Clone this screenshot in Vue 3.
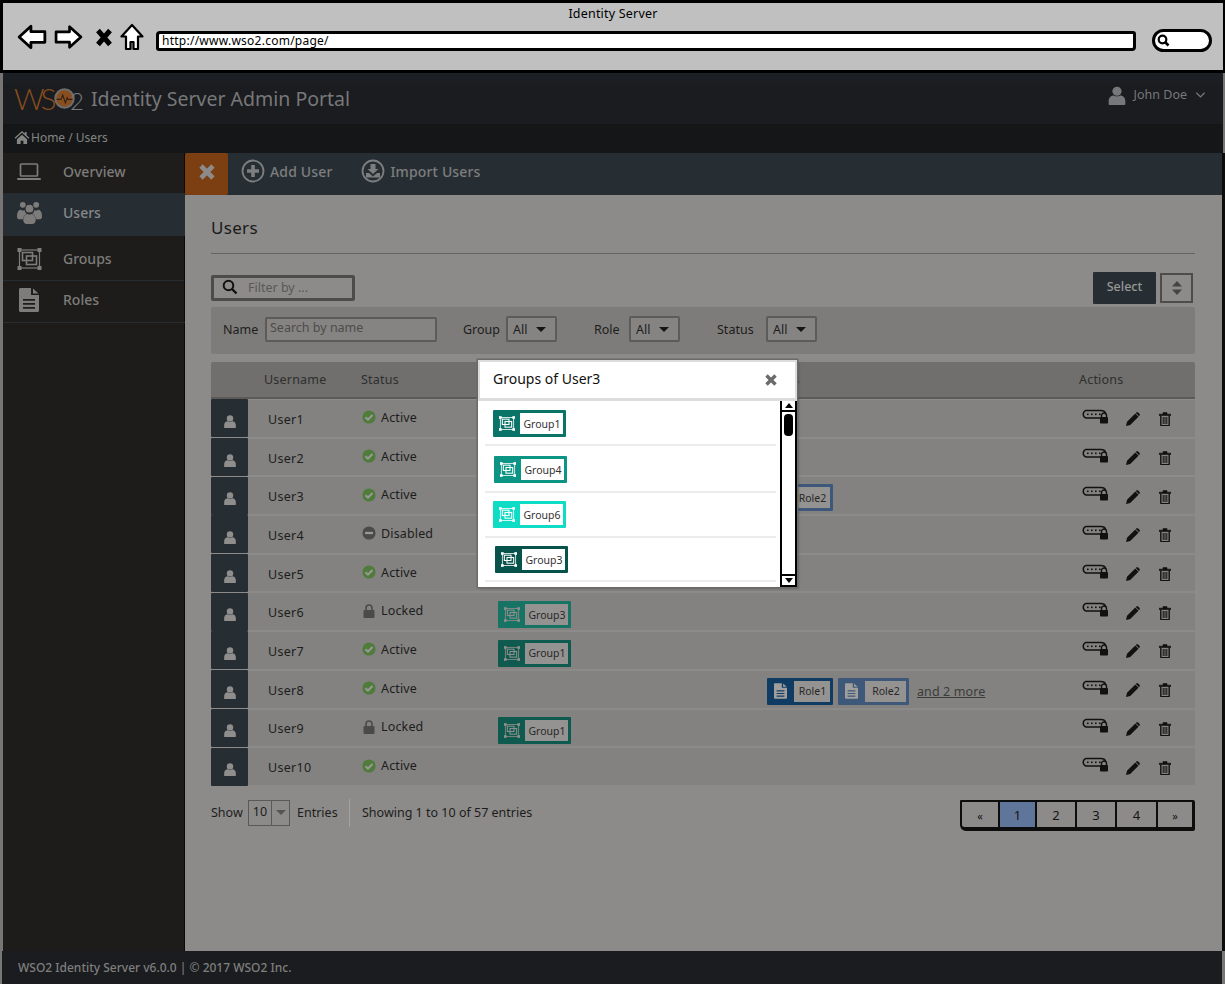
<script setup>
const sideItems = [
  { label: 'Overview', icon: 'laptop', cls: 'overview' },
  { label: 'Users', icon: 'users', cls: 'active' },
  { label: 'Groups', icon: 'group', cls: 'groups' },
  { label: 'Roles', icon: 'doc', cls: 'roles' }
]
const filters = [
  { label: 'Group', cls: 'f-group' },
  { label: 'Role', cls: 'f-role' },
  { label: 'Status', cls: 'f-status' }
]
const users = [
  { name: 'User1', status: 'Active' },
  { name: 'User2', status: 'Active' },
  { name: 'User3', status: 'Active', roles: [{ n: 'Role2', c: '#3d5878' }] },
  { name: 'User4', status: 'Disabled' },
  { name: 'User5', status: 'Active' },
  { name: 'User6', status: 'Locked', group: { n: 'Group3', c: '#177465' } },
  { name: 'User7', status: 'Active', group: { n: 'Group1', c: '#0e5a4e' } },
  { name: 'User8', status: 'Active', roles: [{ n: 'Role1', c: '#103c64' }, { n: 'Role2', c: '#3d5878' }], more: true },
  { name: 'User9', status: 'Locked', group: { n: 'Group1', c: '#0e5a4e' } },
  { name: 'User10', status: 'Active' }
]
const modalGroups = [
  { n: 'Group1', c: '#0a7468', cls: 'm1' },
  { n: 'Group4', c: '#0c9585', cls: 'm2' },
  { n: 'Group6', c: '#0fdcc4', cls: 'm3' },
  { n: 'Group3', c: '#07534c', cls: 'm4' }
]
const statusIcon = { Active: 'check', Disabled: 'minus', Locked: 'lock' }
const pages = ['«', '1', '2', '3', '4', '»']
</script>

<template>
  <div class="page">
    <svg class="defs" width="0" height="0" aria-hidden="true">
      <symbol id="i-user" viewBox="0 0 24 24">
        <circle cx="12" cy="7.500" r="5.500" fill="currentColor" />
        <path d="M2 23v-4c0-4 3-6.500 6-6.500 2.500 1.500 5.500 1.500 8 0 3 0 6 2.500 6 6.500v4c0 .6-.4 1-1 1H3c-.6 0-1-.4-1-1z" fill="currentColor" />
      </symbol>
      <symbol id="i-users" viewBox="0 0 26 24">
        <g fill="currentColor">
          <circle cx="6" cy="4" r="3" /><circle cx="20" cy="4" r="3" /><circle cx="13" cy="8" r="4" />
          <path d="M0 15c0-4 2-6 4-6 1 1 3 1 4 .6.300 2 1.200 3 2 3.600-2 1-3.500 3-3.700 5.800H2c-1 0-2-1-2-2zM26 15c0-4-2-6-4-6-1 1-3 1-4 .6-.3 2-1.200 3-2 3.600 2 1 3.500 3 3.700 5.800H24c1 0 2-1 2-2z" />
          <path d="M6.500 20c0-4 2.500-6.500 4.500-6.500 1.200.8 2.800.8 4 0 2 0 4.500 2.500 4.500 6.500 0 2.500-2 4-3.500 4h-6c-1.500 0-3.500-1.500-3.500-4z" />
        </g>
      </symbol>
      <symbol id="i-laptop" viewBox="0 0 24 18">
        <rect x="3.500" y="1" width="17" height="12" rx="1" fill="none" stroke="currentColor" stroke-width="1.700" />
        <rect x="0" y="15" width="24" height="2" rx="1" fill="currentColor" />
      </symbol>
      <symbol id="i-group" viewBox="0 0 24 22">
        <g fill="none" stroke="currentColor">
          <rect x="2" y="2" width="20" height="18" stroke-width="1.200" />
          <rect x="5" y="4.500" width="10" height="8" stroke-width="1.600" />
          <rect x="9" y="8" width="10" height="8.500" stroke-width="1.600" />
        </g>
        <g fill="currentColor" stroke="none">
          <rect x="0" y="0" width="4" height="4" /><rect x="20" y="0" width="4" height="4" />
          <rect x="0" y="18" width="4" height="4" /><rect x="20" y="18" width="4" height="4" />
        </g>
      </symbol>
      <symbol id="i-doc" viewBox="0 0 20 24">
        <path fill="currentColor" fill-rule="evenodd" d="M1.500 0H12v7h8v15.500c0 .8-.7 1.500-1.500 1.500h-17C.7 24 0 23.300 0 22.500v-21C0 .7.700 0 1.500 0zM4 11v1.800h12V11zm0 4v1.800h12V15zm0 4v1.800h12V19zM14 .5l5.500 5H14z" />
      </symbol>
      <symbol id="i-check" viewBox="0 0 16 16">
        <circle cx="8" cy="8" r="7.500" fill="#4f7c3b" />
        <path d="M4 8.200l2.800 2.800L12 5.700" fill="none" stroke="#9a9997" stroke-width="2.400" />
      </symbol>
      <symbol id="i-minus" viewBox="0 0 16 16">
        <circle cx="8" cy="8" r="7.500" fill="#4a4a49" />
        <rect x="3.500" y="6.700" width="9" height="2.600" fill="#9a9997" />
      </symbol>
      <symbol id="i-lock" viewBox="0 0 12 14">
        <path d="M3 6V4a3 3 0 0 1 6 0v2" fill="none" stroke="#4a4a49" stroke-width="1.600" />
        <rect x="0.500" y="6" width="11" height="8" rx="1" fill="#4a4a49" />
      </symbol>
      <symbol id="i-key" viewBox="0 0 28 15">
        <path d="M20 9H5a4 4 0 0 1 0-7.600h15c2.500 0 4 1 4.500 2.600" fill="none" stroke="#111" stroke-width="1.500" />
        <g fill="#111"><rect x="6" y="4.500" width="1.600" height="1.600" /><rect x="10" y="4.500" width="1.600" height="1.600" /><rect x="14" y="4.500" width="1.600" height="1.600" /><rect x="18" y="4.500" width="1.600" height="1.600" /></g>
        <path d="M20.500 8V6.500a2.500 2.500 0 0 1 5 0V8" fill="none" stroke="#111" stroke-width="1.400" />
        <rect x="19" y="8" width="8" height="6.500" rx=".8" fill="#111" />
      </symbol>
      <symbol id="i-pencil" viewBox="0 0 14 14">
        <path d="M0 14l1-4.200L9.300 1.500 12.500 4.700 4.200 13zM10.200.6c.6-.6 1.400-.6 2 0l1.200 1.200c.6.600.6 1.400 0 2l-.4.400L9.800 1z" fill="#111" />
      </symbol>
      <symbol id="i-trash" viewBox="0 0 12 14">
        <path d="M0 2.200h12v1.300H0zM4 2.200V.6h4v1.600" fill="#111" stroke="#111" stroke-width=".6" />
        <path d="M1.800 3.500V13c0 .4.300.8.800.8h6.800c.5 0 .8-.4.800-.8V3.500" fill="none" stroke="#111" stroke-width="1.400" />
        <path d="M4.200 5v7M6 5v7M7.800 5v7" stroke="#111" stroke-width="1" />
      </symbol>
    </svg>

    <section class="chrome">
      <div class="chrome-title">Identity Server</div>
      <div class="chrome-bar">
        <svg class="nav-icon back" viewBox="0 0 28 24"><path d="M2 12 13 2v5h13v10H13v5z" fill="#fff" stroke="#000" stroke-width="2.600" stroke-linejoin="round" /></svg>
        <svg class="nav-icon fwd" viewBox="0 0 28 24"><path d="M26 12 15 2v5H2v10h13v5z" fill="#fff" stroke="#000" stroke-width="2.600" stroke-linejoin="round" /></svg>
        <svg class="nav-icon stop" viewBox="0 0 16 18"><path d="M2 2l12 14M14 2 2 16" fill="none" stroke="#000" stroke-width="5" /></svg>
        <svg class="nav-icon home" viewBox="0 0 24 28"><path d="M12 2 1.500 13.500H6V26h4.500v-7h3v7H18V13.500h4.500z" fill="#fff" stroke="#000" stroke-width="2.200" stroke-linejoin="round" /></svg>
        <div class="url">http://www.wso2.com/page/</div>
        <div class="search-oval">
          <svg width="13" height="13" viewBox="0 0 13 13"><circle cx="5.500" cy="5.500" r="3.800" fill="none" stroke="#000" stroke-width="2.200" /><path d="M8 8l3.500 3.500" stroke="#000" stroke-width="2.600" /></svg>
        </div>
      </div>
    </section>

    <header class="topbar">
      <div class="logo">
        <span class="logo-ws">WS</span>
        <svg class="logo-o" viewBox="0 0 24 24">
          <circle cx="12" cy="12" r="10.500" fill="#8a4e1e" stroke="#6d6d6b" stroke-width="2.400" />
          <path d="M3 13h5l2-5 3 9 2-6 1 2h5" fill="none" stroke="#2a2018" stroke-width="1.200" />
        </svg>
        <span class="logo-two">2</span>
      </div>
      <h1 class="app-title">Identity Server Admin Portal</h1>
      <div class="account">
        <svg class="account-icon"><use href="#i-user" /></svg>
        <span>John Doe</span>
        <svg class="chev" viewBox="0 0 12 8"><path d="M1.500 1.500 6 6l4.500-4.500" fill="none" stroke="currentColor" stroke-width="1.400" /></svg>
      </div>
    </header>

    <nav class="crumbs">
      <svg class="crumb-home" viewBox="0 0 16 14"><path d="M8 0 0 7.200l1 1.100L8 2l7 6.300 1-1.100-3-2.700V1h-2v1.700zM2.500 9v5h4v-3.500h3V14h4V9L8 4z" fill="currentColor" /></svg>
      <span>Home / Users</span>
    </nav>

    <div class="shell">
      <aside class="sidebar">
        <div v-for="item in sideItems" :key="item.label" class="side-item" :class="item.cls">
          <svg class="side-icon" :class="'si-' + item.icon"><use :href="'#i-' + item.icon" /></svg>
          <span>{{ item.label }}</span>
        </div>
      </aside>

      <main class="main">
        <div class="toolbar">
          <div class="close-box">
            <svg width="18" height="18" viewBox="0 0 18 18"><path d="M3 3l12 12M15 3 3 15" stroke="#8c8b89" stroke-width="4.600" /></svg>
          </div>
          <div class="tool add">
            <svg width="24" height="24" viewBox="0 0 24 24"><circle cx="12" cy="12" r="10.500" fill="none" stroke="currentColor" stroke-width="1.800" /><path d="M12 6v12M6 12h12" stroke="currentColor" stroke-width="3.600" /></svg>
            <span>Add User</span>
          </div>
          <div class="tool import">
            <svg width="24" height="24" viewBox="0 0 24 24"><circle cx="12" cy="12" r="10.500" fill="none" stroke="currentColor" stroke-width="1.800" /><path d="M9.500 5h5v5h3L12 15 6.500 10h3zM5 14h3l4 3.500 4-3.500h3v4.500H5z" fill="currentColor" /></svg>
            <span>Import Users</span>
          </div>
        </div>

        <div class="content">
          <h2 class="page-title">Users</h2>

          <div class="control-row">
            <div class="filter-by">
              <svg width="16" height="16" viewBox="0 0 16 16"><circle cx="6.500" cy="6.500" r="4.800" fill="none" stroke="#111" stroke-width="2" /><path d="M10 10l4.500 4.500" stroke="#111" stroke-width="2.400" /></svg>
              <span>Filter by ...</span>
            </div>
            <div class="select-group">
              <button class="select-btn">Select</button>
              <div class="sort-btn">
                <svg width="12" height="16" viewBox="0 0 12 16"><path d="M6 1l5 5.500H1zM6 15 1 9.500h10z" fill="#444" /></svg>
              </div>
            </div>
          </div>

          <div class="filter-bar">
            <label class="f-name">Name</label>
            <div class="name-input">Search by name</div>
            <template v-for="f in filters" :key="f.label">
              <label :class="f.cls">{{ f.label }}</label>
              <div class="drop"><span>All</span><i class="caret"></i></div>
            </template>
          </div>

          <div class="table">
            <div class="thead">
              <span class="h-user">Username</span>
              <span class="h-status">Status</span>
              <span class="h-roles">Roles</span>
              <span class="h-actions">Actions</span>
            </div>
            <div v-for="u in users" :key="u.name" class="row">
              <div class="avatar"><svg class="avatar-user"><use href="#i-user" /></svg></div>
              <div class="c-name">{{ u.name }}</div>
              <div class="c-status">
                <svg class="status-icon" :class="'st-' + statusIcon[u.status]"><use :href="'#i-' + statusIcon[u.status]" /></svg>
                <span>{{ u.status }}</span>
              </div>
              <div class="c-group">
                <div v-if="u.group" class="chip" :style="{ '--chip': u.group.c }">
                  <span class="chip-icon"><svg class="chip-svg"><use href="#i-group" /></svg></span>
                  <span class="chip-text">{{ u.group.n }}</span>
                </div>
              </div>
              <div class="c-roles">
                <div v-for="r in u.roles" :key="r.n" class="chip role" :style="{ '--chip': r.c }">
                  <span class="chip-icon"><svg class="chip-doc"><use href="#i-doc" /></svg></span>
                  <span class="chip-text">{{ r.n }}</span>
                </div>
                <a v-if="u.more" class="more">and 2 more</a>
              </div>
              <div class="c-actions">
                <svg class="a-key"><use href="#i-key" /></svg>
                <svg class="a-pencil"><use href="#i-pencil" /></svg>
                <svg class="a-trash"><use href="#i-trash" /></svg>
              </div>
            </div>
          </div>

          <div class="table-foot">
            <span class="show">Show</span>
            <div class="len"><span class="len-val">10</span><span class="len-arrow"><i class="caret small"></i></span></div>
            <span class="entries">Entries</span>
            <span class="sep"></span>
            <span>Showing 1 to 10 of 57 entries</span>
            <div class="pager">
              <span v-for="(p, i) in pages" :key="p" class="pg" :class="['pg' + i, { on: p === '1', arrow: i === 0 || i === 5 }]">{{ p }}</span>
            </div>
          </div>
        </div>
      </main>
    </div>

    <footer class="foot">WSO2 Identity Server v6.0.0 | © 2017 WSO2 Inc.</footer>

    <div class="modal">
      <div class="modal-head">
        <span>Groups of User3</span>
        <svg width="12" height="12" viewBox="0 0 12 12"><path d="M1.500 1.500l9 9M10.500 1.500l-9 9" stroke="#6a6a6a" stroke-width="3.400" /></svg>
      </div>
      <div class="modal-body">
        <ul class="modal-list">
          <li v-for="g in modalGroups" :key="g.n" :class="g.cls">
            <div class="chip bright" :style="{ '--chip': g.c }">
              <span class="chip-icon"><svg class="chip-svg"><use href="#i-group" /></svg></span>
              <span class="chip-text">{{ g.n }}</span>
            </div>
          </li>
        </ul>
        <div class="scrollbar">
          <span class="sb-btn"><i class="sb-up"></i></span>
          <span class="sb-track"><i class="sb-thumb"></i></span>
          <span class="sb-btn"><i class="sb-down"></i></span>
        </div>
      </div>
    </div>
  </div>
</template>

<style>
html, body { margin: 0; background: #8c8b89; }
</style>

<style scoped>
.page {
  position: relative;
  width: 1225px;
  height: 984px;
  overflow: hidden;
  display: flex;
  flex-direction: column;
  background: #777675;
  font-family: "Noto Sans", "Lato", sans-serif;
  font-size: 12.500px;
  color: #1d1d1c;
}
.defs { position: absolute; }

/* browser chrome */
.chrome {
  height: 73px;
  box-sizing: border-box;
  flex: none;
  background: #c0c0c0;
  border: 3px solid #000;
  border-right-width: 2px;
  display: flex;
  flex-direction: column;
  color: #000;
}
.chrome-title { text-align: center; font-size: 12.500px; line-height: 17px; margin-top: 2px; letter-spacing: .2px; }
.chrome-bar { display: flex; align-items: center; padding: 0 0 0 14px; margin-top: -4px; height: 38px; }
.nav-icon { display: block; flex: none; }
.back { width: 30px; height: 26px; }
.fwd { width: 29px; height: 26px; margin-left: 7px; }
.stop { width: 16px; height: 19px; margin-left: 13px; }
.home { width: 24px; height: 28px; margin-left: 8px; }
.url {
  width: 980px;
  height: 20px;
  flex: none;
  box-sizing: border-box;
  margin-left: 12px;
  margin-top: 8px;
  background: #fff;
  border: 3px solid #000;
  border-radius: 4px 3px 4px 3px;
  font-size: 12px;
  line-height: 14px;
  padding-left: 3px;
  letter-spacing: .25px;
}
.search-oval {
  width: 60px;
  height: 23px;
  flex: none;
  box-sizing: border-box;
  margin-left: 16px;
  margin-top: 7px;
  background: #fff;
  border: 3px solid #000;
  border-radius: 12px;
  display: flex;
  align-items: center;
  padding-left: 2px;
}

/* top bar */
.topbar {
  height: 51px;
  flex: none;
  margin-left: 3px;
  margin-right: 2px;
  background: linear-gradient(#1c2126, #1a1c1f 30%);
  display: flex;
  align-items: center;
  color: #777879;
}
.logo { display: flex; align-items: center; margin-left: 11px; width: 77px; flex: none; position: relative; height: 51px; }
.logo-ws { font-family: "Lato", sans-serif; font-weight: 300; font-size: 30px; color: #8a4e1e; letter-spacing: -4px; line-height: 51px; }
.logo-o { width: 21px; height: 21px; margin-left: 1px; margin-top: -1px; }
.logo-two { position: absolute; left: 56px; top: 13px; font-family: "Lato", sans-serif; font-weight: 300; font-size: 24px; line-height: 30px; color: #777879; }
.app-title { margin: 0; font-weight: 400; font-size: 19.500px; color: #777879; line-height: 50px; white-space: nowrap; }
.account { margin-left: auto; display: flex; align-items: center; margin-right: 17px; font-size: 12.500px; margin-top: -8px; }
.account-icon { width: 20px; height: 22px; margin-right: 7px; }
.chev { width: 11px; height: 8px; margin-left: 8px; }

.crumbs {
  height: 29px;
  flex: none;
  margin-left: 3px;
  margin-right: 2px;
  background: #141617;
  display: flex;
  align-items: center;
  padding: 0 0 2px 11px;
  box-sizing: border-box;
  font-size: 12px;
  color: #858585;
}
.crumb-home { width: 16px; height: 13px; margin-right: 1px; }

/* shell */
.shell { flex: 1; display: flex; min-height: 0; margin-left: 3px; border-right: 3px solid #0c0c0c; }
.sidebar { width: 181px; flex: none; background: #1d1c1a; border-right: 1px solid #0a0a0a; color: #7d7c7a; }
.side-item { display: flex; align-items: center; box-sizing: border-box; font-size: 14px; font-weight: 500; }
.side-item.overview { height: 39px; background: #1f1d1b; margin-bottom: 1px; padding-bottom: 2px; }
.side-item.active { height: 43px; background: #272e33; color: #85878a; padding-bottom: 4px; width: 183px; }
.side-item.groups { height: 45px; border-bottom: 1px solid #272e33; padding-top: 1px; }
.side-item.roles { height: 42px; border-bottom: 1px solid #272e33; padding-bottom: 4px; width: 185px; }
.side-icon { flex: none; color: #7d7c7a; margin-left: 14px; margin-right: 21px; width: 25px; height: 25px; }
.si-laptop { height: 18px; width: 24px; margin-right: 22px; }
.si-users { height: 23px; width: 25px; }
.si-group { height: 22px; width: 25px; }
.si-doc { height: 24px; width: 22px; margin-left: 15px; margin-right: 23px; }

.main { flex: 1; min-width: 0; display: flex; flex-direction: column; background: #8c8b89; position: relative; }
.toolbar { height: 42px; flex: none; background: #272e33; display: flex; align-items: center; color: #7d7e7f; font-size: 14px; font-weight: 500; letter-spacing: .15px; }
.close-box { width: 43px; height: 42px; background: #7b3f12; border-radius: 2px; display: flex; align-items: center; justify-content: center; padding-bottom: 4px; box-sizing: border-box; }
.tool { display: flex; align-items: center; gap: 5px; padding-bottom: 6px; }
.add { margin-left: 13px; }
.import { margin-left: 29px; }

.content { flex: 1; padding: 0 27px 0 26px; display: flex; flex-direction: column; }
.page-title {
  margin: 0;
  height: 59px;
  box-sizing: border-box;
  border-bottom: 1.500px solid #666564;
  font-weight: 400;
  font-size: 17px;
  line-height: 65px;
  letter-spacing: .3px;
  color: #1a1a19;
}
.control-row { display: flex; align-items: center; justify-content: space-between; margin-top: 18px; height: 32px; }
.filter-by {
  width: 144px;
  height: 26px;
  box-sizing: border-box;
  border: 3px solid #4d4c4b;
  border-radius: 2px;
  display: flex;
  align-items: center;
  gap: 10px;
  padding: 0 0 2px 8px;
  color: #595857;
  font-size: 12.500px;
}
.select-group { display: flex; align-items: center; gap: 4px; margin-right: 2px; }
.select-btn {
  width: 63px;
  height: 32px;
  border: 0;
  padding: 0 0 3px;
  background: #272e33;
  color: #989897;
  font: inherit;
  font-weight: 500;
  border-radius: 1px;
}
.sort-btn {
  width: 33px;
  height: 30px;
  box-sizing: border-box;
  border: 2px solid #4d4c4b;
  display: flex;
  align-items: center;
  justify-content: center;
}

.filter-bar {
  margin-top: 3px;
  height: 47px;
  box-sizing: border-box;
  background: #7d7c7a;
  border-radius: 2px;
  display: flex;
  align-items: center;
  padding: 0 0 3px 12px;
}
.f-name { width: 42px; flex: none; }
.name-input {
  width: 172px;
  height: 25px;
  flex: none;
  box-sizing: border-box;
  border: 2.500px solid #5c5b5a;
  border-radius: 2px;
  background: #858482;
  color: #4d4c4b;
  line-height: 18px;
  padding-left: 3px;
}
.f-group { margin-left: 26px; width: 43px; flex: none; }
.f-role { margin-left: 37px; width: 35px; flex: none; }
.f-status { margin-left: 37px; width: 49px; flex: none; }
.drop {
  width: 51px;
  height: 26px;
  flex: none;
  box-sizing: border-box;
  border: 2.500px solid #5c5b5a;
  border-radius: 2px;
  display: flex;
  align-items: center;
  padding-left: 5px;
  background: #858482;
}
.caret { display: block; width: 0; height: 0; border-left: 5px solid transparent; border-right: 5px solid transparent; border-top: 5px solid #151515; margin-left: auto; margin-right: 9px; }
.caret.small { border-top-color: #555; margin: 0; }

.table { margin-top: 8px; }
.thead {
  height: 37px;
  box-sizing: border-box;
  margin-bottom: 1px;
  background: #706f6d;
  border-bottom: 2px solid #5b5a59;
  border-radius: 2px 2px 0 0;
  display: flex;
  align-items: center;
  color: #2e2e2d;
  position: relative;
  letter-spacing: .2px;
}
.h-user { margin-left: 53px; width: 97px; flex: none; }
.h-roles { position: absolute; left: 556px; }
.h-actions { position: absolute; left: 868px; }
.row {
  height: 36.700px;
  margin-bottom: 2px;
  background: #838280;
  display: flex;
  align-items: center;
  border-radius: 1px;
}
.avatar {
  width: 37px;
  height: 38px;
  flex: none;
  background: #272e33;
  border-radius: 1px;
  display: flex;
  align-items: center;
  justify-content: center;
}
.avatar-user { width: 14px; height: 16px; color: #8f8e8c; margin-top: 5px; }
.c-name { width: 94px; margin-left: 20px; margin-top: 2px; flex: none; letter-spacing: .3px; }
.c-status { width: 136px; flex: none; display: flex; align-items: center; gap: 5px; margin-bottom: 2px; letter-spacing: .15px; }
.status-icon { width: 14px; height: 14px; flex: none; }
.st-lock { width: 12px; height: 14px; margin: 0 1px; }
.c-group { width: 269px; flex: none; padding-top: 6px; box-sizing: border-box; }
.c-roles { width: 314px; flex: none; display: flex; align-items: center; gap: 5px; padding-top: 4px; box-sizing: border-box; }
.c-actions { flex: none; display: flex; align-items: center; color: #111; margin-top: 2px; }
.a-key { width: 28px; height: 15px; margin-bottom: 6px; }
.a-pencil { width: 14px; height: 14px; margin-left: 17px; }
.a-trash { width: 12px; height: 14px; margin-left: 19px; }

.chip {
  display: inline-flex;
  align-items: stretch;
  width: 73px;
  height: 27px;
  box-sizing: border-box;
  background: var(--chip);
  padding: 3px 3px 3px 0;
  border-radius: 1px;
  vertical-align: top;
}
.chip.role { width: 66px; }
.chip.role + .chip.role { width: 71px; }
.chip-icon { width: 27px; flex: none; display: flex; align-items: center; justify-content: center; }
.chip-svg { width: 16px; height: 15px; color: #8f8e8c; }
.chip-doc { width: 13px; height: 16px; color: #a09f9d; }
.chip-text {
  flex: 1;
  background: #949391;
  color: #282827;
  font-size: 10.500px;
  display: flex;
  align-items: center;
  justify-content: center;
  padding-left: 1px;
}
.more { color: #3c3c3b; text-decoration: underline; margin-left: 3px; letter-spacing: .1px; }

.table-foot { display: flex; align-items: center; height: 44px; margin-top: 4px; position: relative; }
.show { width: 37px; flex: none; }
.len {
  display: flex;
  width: 42px;
  height: 26px;
  flex: none;
  box-sizing: border-box;
  margin-right: 7px;
  border: 1.500px solid #5a5958;
}
.len-val { width: 22px; text-align: center; border-right: 1.500px solid #5a5958; line-height: 22px; }
.len-arrow { flex: 1; display: flex; align-items: center; justify-content: center; }
.entries { width: 42px; flex: none; }
.sep { width: 1px; height: 28px; background: #a3a2a0; margin: 0 12px 0 10px; flex: none; }
.pager {
  margin-left: auto;
  display: flex;
  box-sizing: border-box;
  width: 235px;
  height: 31px;
  border: 2px solid #0d0d0d;
  border-right-width: 3px;
  border-bottom-width: 4px;
  border-radius: 1px 2px 2px 6px;
  margin-top: 6px;
}
.pg { display: flex; align-items: center; justify-content: center; color: #151515; border-right: 2px solid #0d0d0d; box-sizing: border-box; font-size: 13px; }
.pg.arrow { font-size: 11px; padding-top: 2px; }
.pg0 { width: 38px; }
.pg1 { width: 37px; }
.pg2 { width: 40px; }
.pg3 { width: 40px; }
.pg4 { width: 41px; }
.pg5 { flex: 1; border-right: 0; }
.pg.on { background: #5f769a; }

.foot {
  height: 33px;
  flex: none;
  box-sizing: border-box;
  margin-left: 2px;
  margin-right: 3px;
  background: #1a1c1f;
  color: #7f7f7e;
  font-size: 12px;
  font-weight: 500;
  line-height: 33px;
  padding-left: 16px;
}

/* modal */
.modal {
  position: absolute;
  left: 478px;
  top: 360px;
  width: 319px;
  height: 227px;
  display: flex;
  flex-direction: column;
  box-shadow: 0 0 0 1.500px #6b6a69, 2px 2px 2px rgba(0, 0, 0, .2);
}
.modal-head {
  height: 41px;
  box-sizing: border-box;
  flex: none;
  background: #fff;
  border: 2px solid #dcdcdc;
  border-bottom-width: 3px;
  display: flex;
  align-items: center;
  justify-content: space-between;
  padding: 0 18px 3px 13px;
  color: #111;
  font-size: 14px;
}
.modal-head svg { margin-top: 3px; }
.modal-body { flex: 1; min-height: 0; display: flex; background: #fff; }
.modal-list { flex: 1; list-style: none; margin: 0; padding: 0 4px 0 7px; }
.modal-list li { height: 45px; box-sizing: border-box; border-bottom: 2px solid #ececec; padding-left: 8px; padding-top: 9px; }
.modal-list li.m2 { padding-left: 9px; height: 47px; padding-top: 10px; }
.modal-list li.m3 { padding-left: 8px; padding-top: 8px; }
.modal-list li.m4 { padding-left: 10px; height: 44px; padding-top: 8px; }
.chip.bright .chip-text { background: #fff; color: #333; }
.chip.bright .chip-svg { color: #fff; }
.scrollbar { width: 17px; flex: none; box-sizing: border-box; border-left: 2px solid #000; border-right: 2px solid #000; display: flex; flex-direction: column; background: #fff; }
.sb-btn { height: 9px; flex: none; border-bottom: 2px solid #000; display: flex; align-items: center; justify-content: center; }
.sb-btn:last-child { border-top: 2px solid #000; }
.sb-up { width: 0; height: 0; border-left: 4px solid transparent; border-right: 4px solid transparent; border-bottom: 5px solid #000; }
.sb-down { width: 0; height: 0; border-left: 4px solid transparent; border-right: 4px solid transparent; border-top: 5px solid #000; }
.sb-track { flex: 1; padding: 2px 2px 0 2px; }
.sb-thumb { display: block; width: 9px; height: 22px; background: #000; border-radius: 4px; }
</style>
